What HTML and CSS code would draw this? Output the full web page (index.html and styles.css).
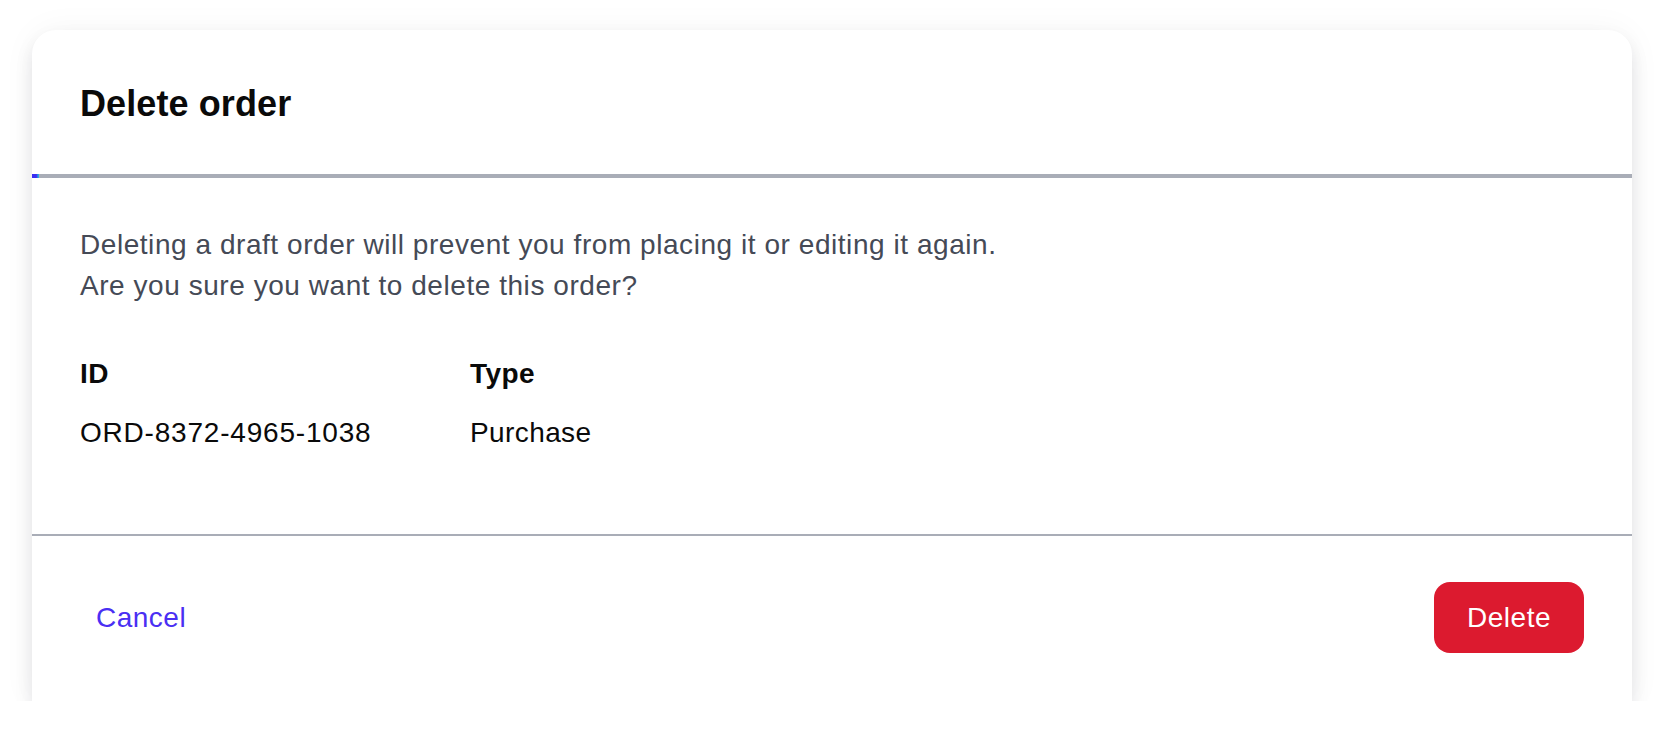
FILE: index.html
```html
<!DOCTYPE html>
<html lang="en">
<head>
<meta charset="utf-8">
<title>Delete order</title>
<link rel="stylesheet" href="styles.css">
</head>
<body>
  <div class="dialog">
    <header class="dialog-header">
      <h1 class="dialog-title">Delete order</h1>
    </header>
    <div class="progress-track"><div class="progress-fill" style="width: 7px"></div></div>
    <section class="dialog-body">
      <p class="dialog-text">Deleting a draft order will prevent you from placing it or editing it again.<br>Are you sure you want to delete this order?</p>
      <div class="details">
        <div class="details-label">ID</div>
        <div class="details-label">Type</div>
        <div class="details-value details-id">ORD-8372-4965-1038</div>
        <div class="details-value">Purchase</div>
      </div>
    </section>
    <footer class="dialog-footer">
      <button class="btn btn-link" type="button">Cancel</button>
      <button class="btn btn-danger" type="button">Delete</button>
    </footer>
  </div>
</body>
</html>
```

FILE: styles.css
```css
* {
  box-sizing: border-box;
}

html, body {
  margin: 0;
  padding: 0;
  background: #ffffff;
}

body {
  font-family: "Liberation Sans", Arial, Helvetica, sans-serif;
  padding: 30px 32px 0 32px;
}

.dialog {
  width: 1600px;
  background: #ffffff;
  border-radius: 24px 24px 0 0;
  box-shadow: 0 10px 18px rgba(20, 24, 40, 0.1), 0 0 34px rgba(20, 24, 40, 0.045);
}

.dialog-header {
  padding: 52px 48px 48px 48px;
}

.dialog-title {
  margin: 0;
  font-size: 36px;
  line-height: 44px;
  font-weight: 700;
  letter-spacing: 0.1px;
  color: #0a0a0a;
}

.progress-track {
  height: 4px;
  background: #a9adb7;
}

.progress-fill {
  height: 100%;
  background: linear-gradient(90deg, #3a2cf2 0%, #3a2cf2 60%, #28c6dc 100%);
}

.dialog-body {
  padding: 46px 48px 81px 48px;
}

.dialog-text {
  margin: 0 0 47px 0;
  font-size: 28px;
  line-height: 41px;
  letter-spacing: 0.55px;
  color: #454a56;
}

.details {
  display: grid;
  grid-template-columns: 390px auto;
  row-gap: 18px;
  font-size: 28px;
  line-height: 41px;
  letter-spacing: 0.4px;
  color: #0a0a0a;
}

.details-label {
  font-weight: 700;
}

.details-id {
  letter-spacing: 0.8px;
}

.dialog-footer {
  border-top: 2px solid #a9adb7;
  padding: 46px 48px 48px 48px;
  display: flex;
  align-items: center;
  justify-content: space-between;
}

.btn {
  font-family: inherit;
  font-size: 28px;
  letter-spacing: 0.5px;
  border: none;
  cursor: pointer;
  height: 71px;
  line-height: 71px;
}

.btn-link {
  background: transparent;
  color: #4a2ff3;
  padding: 0 16px;
}

.btn-danger {
  background: #dc1a2f;
  color: #ffffff;
  border-radius: 16px;
  padding: 0 33px;
}
```
